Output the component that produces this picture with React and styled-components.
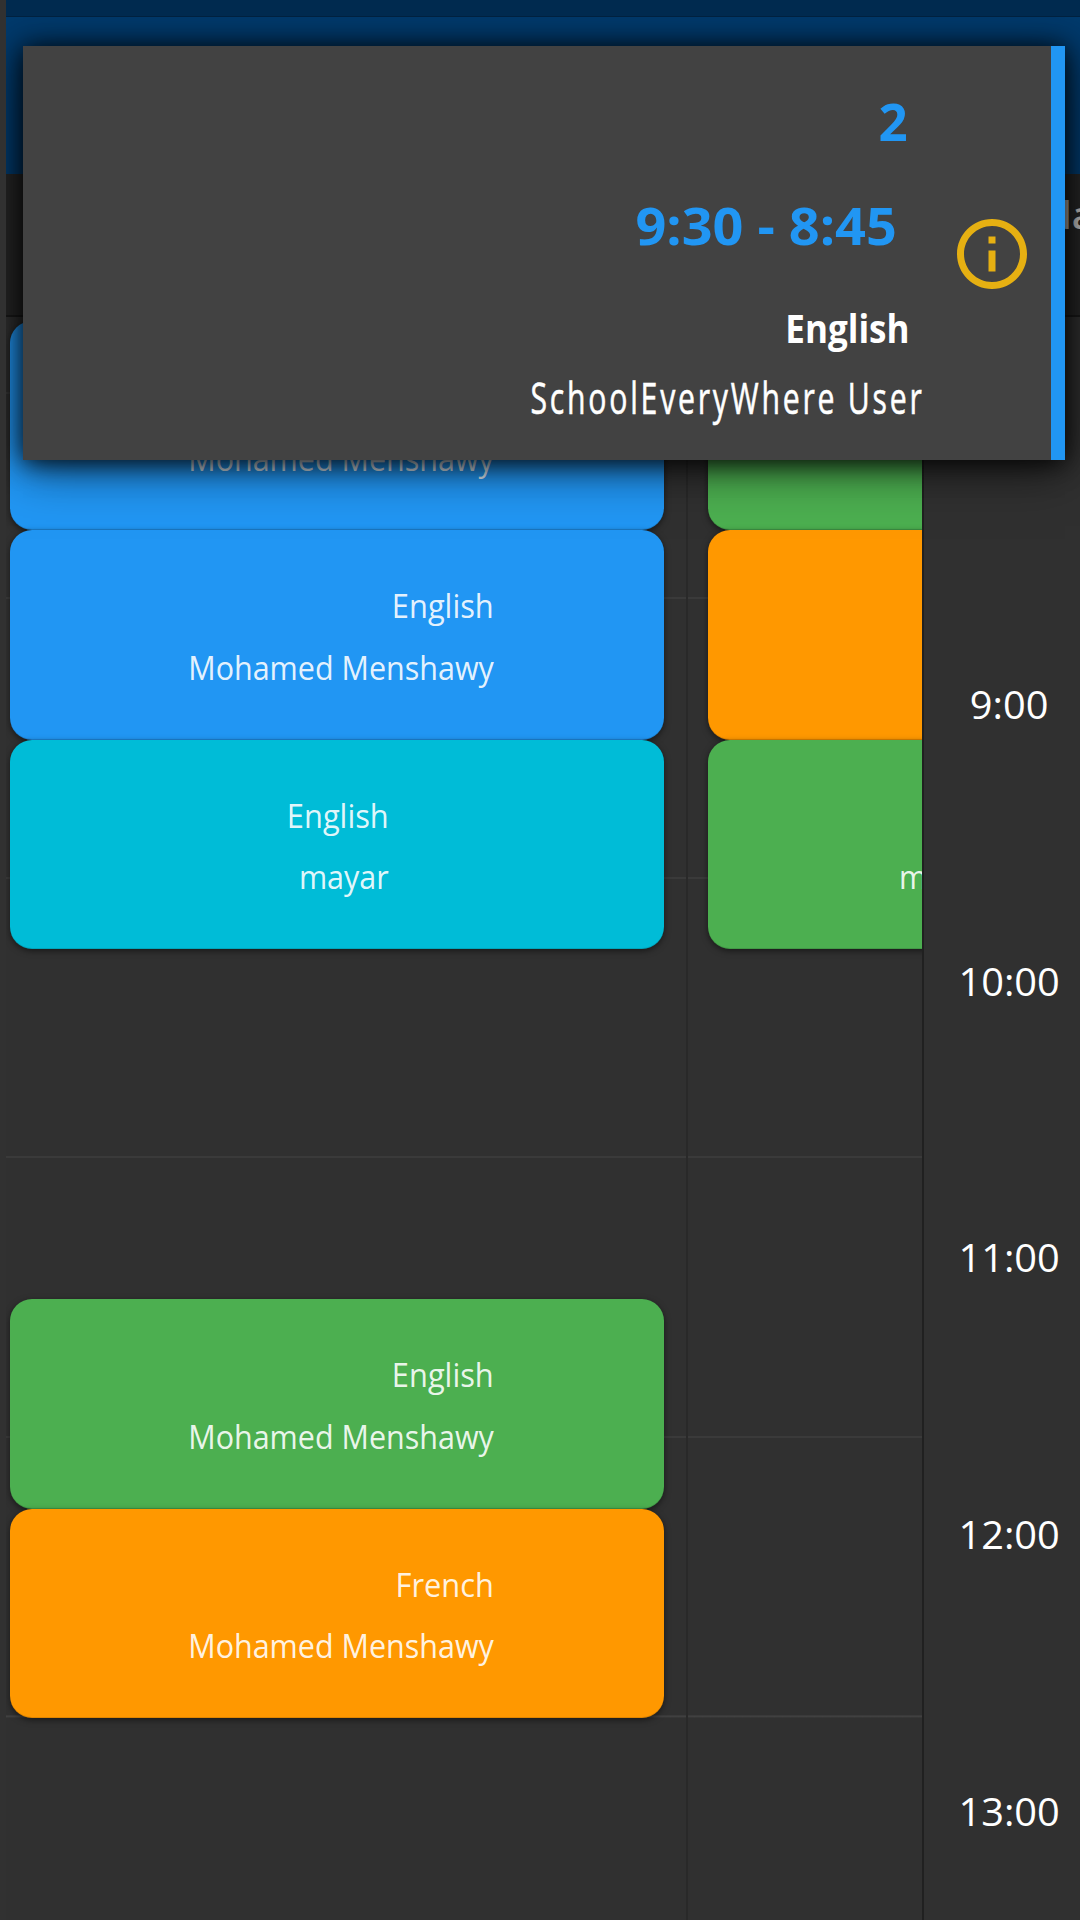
import React from "react";
import styled, { createGlobalStyle } from "styled-components";
import { MdInfoOutline } from "react-icons/md";

const GlobalStyle = createGlobalStyle`
    * {
        box-sizing: border-box;
    }
    body {
        margin: 0;
        background-color: #303030;
        font-family: "Open Sans", "Noto Sans", sans-serif;
    }
`;

const Page = styled.div`
    position: relative;
    display: flex;
    width: 1080px;
    height: 1920px;
    overflow: hidden;
    background-color: #303030;
`;

const Gutter = styled.div`
    position: relative;
    z-index: 3;
    flex: none;
    width: 6px;
    background-color: #313131;
`;

const Screen = styled.div`
    flex: 1;
    min-width: 0;
    display: flex;
    flex-direction: column;
`;

const StatusBar = styled.div`
    position: relative;
    z-index: 3;
    flex: none;
    height: 17px;
    border-bottom: 1px solid #00213f;
    background-color: #002a4f;
`;

const AppBar = styled.div`
    flex: none;
    height: 157px;
    background-color: #003a6c;
`;

const DayHeader = styled.div`
    flex: none;
    display: flex;
    justify-content: flex-end;
    height: 143px;
    padding-top: 13px;
    border-bottom: 2px solid #191919;
    background-color: #262626;
`;

const DayName = styled.span`
    width: 32px;
    font-size: 38px;
    font-weight: 600;
    line-height: 54px;
    color: #c4c4c4;
    white-space: nowrap;
`;

const Body = styled.div`
    flex: 1;
    display: flex;
    min-height: 0;
`;

const Days = styled.div`
    flex: none;
    display: flex;
    width: 918px;
    overflow: hidden;
    border-right: 2px solid #202020;
    background-image: repeating-linear-gradient(to bottom, #444 0, #444 1px, transparent 1.3px, transparent 279.6px);
    background-position: 0 280.5px;
`;

const Day = styled.div`
    flex: none;
    width: 682px;
    padding: 4px 22px 0 4px;
    border-right: 2px solid #292929;
`;

const Lesson = styled.div`
    display: flex;
    flex-direction: column;
    align-items: flex-end;
    height: 209.4px;
    margin-top: ${(props) => props.$gap || 0}px;
    padding: 45px ${(props) => props.$right || 170}px 0 0;
    border-radius: 22px;
    background-color: ${(props) => props.$color};
    box-shadow: 0 2px 6px rgba(0, 0, 0, 0.5), inset 0 -1px 0 rgba(0, 0, 0, 0.12);
`;

const LessonText = styled.span`
    height: 61.5px;
    font-size: 33.5px;
    line-height: 61px;
    color: rgba(255, 255, 255, 0.9);
    white-space: nowrap;
    transform: scaleX(${(props) => props.$stretch || 0.92});
    transform-origin: right;
`;

const Hours = styled.div`
    flex: 1;
    padding-top: 248px;
`;

const Hour = styled.div`
    display: flex;
    align-items: center;
    justify-content: center;
    height: 276.8px;
    padding-left: 14px;
    font-size: 39px;
    color: #fff;
    transform: scaleX(1.02);
`;

const Popup = styled.div`
    position: absolute;
    z-index: 2;
    top: 46px;
    left: 23px;
    display: flex;
    width: 1042px;
    height: 414px;
    border-right: 14px solid #2196f3;
    background-color: #424242;
    box-shadow: 0 2px 24px rgba(0, 0, 0, 0.9), 0 10px 46px rgba(0, 0, 0, 0.55);
`;

const Details = styled.div`
    flex: 1;
    display: flex;
    flex-direction: column;
    align-items: flex-end;
    padding-top: 23px;
`;

const Highlight = styled.div`
    height: 103px;
    margin-right: ${(props) => props.$right}px;
    font-size: 52px;
    font-weight: 700;
    line-height: ${(props) => props.$line || 103}px;
    color: #2196f3;
    transform: scaleX(${(props) => props.$stretch});
    transform-origin: right;
`;

const Subject = styled.div`
    height: 81px;
    margin-right: 14px;
    font-size: 38.5px;
    font-weight: 700;
    line-height: 107px;
    color: #fff;
    transform: scaleX(0.91);
    transform-origin: right;
`;

const Teacher = styled.div`
    height: 60px;
    margin-right: -1px;
    font-size: 44px;
    letter-spacing: 4px;
    line-height: 83px;
    color: #fff;
    white-space: nowrap;
    -webkit-text-stroke: 0.6px #fff;
    transform: scaleX(0.687);
    transform-origin: right;
`;

const IconWrap = styled.div`
    flex: none;
    width: 127px;
    padding: 166px 0 0 26px;
    color: #e6b012;
    svg {
        display: block;
    }
`;

const firstDay = [
    { subject: "", teacher: "Mohamed Menshawy", color: "#2196f3" },
    { subject: "English", teacher: "Mohamed Menshawy", color: "#2196f3" },
    { subject: "English", teacher: "mayar", color: "#00bcd7", right: 275 },
    { subject: "English", teacher: "Mohamed Menshawy", color: "#4caf50", gap: 350 },
    { subject: "French", teacher: "Mohamed Menshawy", color: "#ff9800" },
];

const secondDay = [
    { subject: "", teacher: "", color: "#4caf50" },
    { subject: "", teacher: "", color: "#ff9800" },
    { subject: "", teacher: "mayar", color: "#4caf50", right: 375 },
];

const hours = ["9:00", "10:00", "11:00", "12:00", "13:00"];

const DayColumn = ({ lessons, className }) => (
    <Day className={className}>
        {lessons.map((item, index) => (
            <Lesson key={index} $color={item.color} $gap={item.gap} $right={item.right}>
                <LessonText>{item.subject}</LessonText>
                <LessonText $stretch={0.91}>{item.teacher}</LessonText>
            </Lesson>
        ))}
    </Day>
);

const NextDay = styled(DayColumn)`
    width: 700px;
    padding-left: 20px;
`;

const App = () => {
    return (
        <Page>
            <GlobalStyle />
            <Gutter />
            <Screen>
                <StatusBar />
                <AppBar />
                <DayHeader>
                    <DayName>day</DayName>
                </DayHeader>
                <Body>
                    <Days>
                        <DayColumn lessons={firstDay} />
                        <NextDay lessons={secondDay} />
                    </Days>
                    <Hours>
                        {hours.map((hour) => (
                            <Hour key={hour}>{hour}</Hour>
                        ))}
                    </Hours>
                </Body>
            </Screen>
            <Popup>
                <Details>
                    <Highlight $right={16} $stretch={0.98}>2</Highlight>
                    <Highlight $right={27} $stretch={1.038} $line={105}>9:30 - 8:45</Highlight>
                    <Subject>English</Subject>
                    <Teacher>SchoolEveryWhere User</Teacher>
                </Details>
                <IconWrap>
                    <MdInfoOutline size={84} />
                </IconWrap>
            </Popup>
        </Page>
    );
};

export default App;
